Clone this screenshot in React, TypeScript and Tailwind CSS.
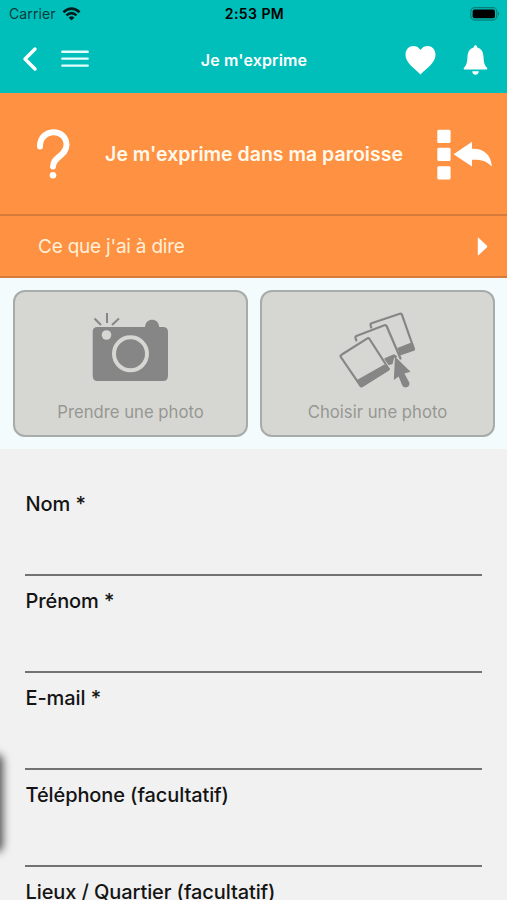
import React, { useState } from 'react';

interface FieldProps {
  label: string;
  name: string;
}

const FIELDS: FieldProps[] = [
  { label: 'Nom *', name: 'nom' },
  { label: 'Prénom *', name: 'prenom' },
  { label: 'E-mail *', name: 'email' },
  { label: 'Téléphone (facultatif)', name: 'telephone' },
  { label: 'Lieux / Quartier (facultatif)', name: 'lieux' },
];

const StatusBar = () => (
  <div className="grid h-[27px] grid-cols-3 items-center pl-[9px] pr-[7px] text-[14px] leading-none text-black">
    <div className="flex items-center gap-[6px] text-[#063b39]">
      <span className="tracking-[0.1px]">Carrier</span>
      <svg className="h-[14px] w-[19px]" viewBox="0 0 19 14" fill="none" stroke="#001c1b" strokeWidth="2.6">
        <path d="M1.4 5.2Q9.5-2 17.6 5.2" />
        <path d="M4.4 8.4Q9.5 3.9 14.6 8.4" />
        <path d="M6.6 10.5Q9.5 8 12.4 10.5L9.5 13.6Z" fill="#001c1b" stroke="none" />
      </svg>
    </div>
    <span className="pt-px text-center text-[14px] font-semibold tracking-[0.45px]">2:53 PM</span>
    <svg className="h-[14px] w-[30px] justify-self-end" viewBox="0 0 30 14">
      <rect x="0.8" y="0.7" width="26" height="12.4" rx="4" fill="none" stroke="#087f7b" strokeWidth="1.2" />
      <rect x="2.6" y="2.5" width="22.4" height="8.8" rx="2" fill="#000" />
      <path d="M28 4.8Q30.4 6.9 28 9Z" fill="#087f7b" />
    </svg>
  </div>
);

const NavBar = () => (
  <div className="grid h-[66px] grid-cols-3 items-center pl-[22px] pr-[19px]">
    <div className="flex items-center gap-[23px] pb-[2px]">
      <button title="Retour">
        <svg className="h-[26px] w-4" viewBox="0 0 16 26" fill="none" stroke="#fff" strokeWidth="3.4" strokeLinecap="round" strokeLinejoin="round">
          <path d="M13 3L3 13l10 10" />
        </svg>
      </button>
      <button title="Menu">
        <svg className="h-[26px] w-7" viewBox="0 0 28 26" fill="none" stroke="#e4fffd" strokeWidth="2.4" strokeLinecap="round">
          <path d="M1.3 5.8h25.4M1.3 12.6h25.4M1.3 19.6h25.4" />
        </svg>
      </button>
    </div>
    <h1 className="whitespace-nowrap pr-[2px] text-center text-[16px] font-semibold leading-none tracking-[0.15px] text-white">Je m'exprime</h1>
    <div className="flex items-center justify-end gap-[27px]">
      <button title="Favoris">
        <svg className="h-8 w-[31px]" viewBox="0 0 31 32" fill="#fff">
          <path d="M15.5 6C18.5 0 30.5-.3 30.5 11C30.5 18.5 22 24 15.5 30.5C9 24 .5 18.5.5 11C.5-.3 12.5 0 15.5 6Z" />
        </svg>
      </button>
      <button title="Notifications">
        <svg className="h-8 w-[25px]" viewBox="0 0 25 32" fill="#fff">
          <path d="M12.5 1.2C13.9 1.2 14.2 2.2 14.2 3.4C18.6 4.6 20.2 8 20.5 12.5C20.8 19 21.5 21 24 23.8C24.7 24.8 24.3 25.6 23 25.6H2C.7 25.6.3 24.8 1 23.8C3.5 21 4.2 19 4.5 12.5C4.8 8 6.4 4.6 10.8 3.4C10.8 2.2 11.1 1.2 12.5 1.2Z" />
          <path d="M9.2 27.2H15.8C15.6 32 9.4 32 9.2 27.2Z" />
        </svg>
      </button>
    </div>
  </div>
);

const Banner = () => (
  <div className="flex h-[123px] items-center justify-between border-b-2 border-[#d67b3b] pl-[35px] pr-[14px]">
    <svg className="h-[52px] w-9" viewBox="0 0 36 52" fill="none" stroke="#fff" strokeWidth="6" strokeLinecap="round">
      <path d="M5 18.5C4.6 0 31.5-.5 31.5 17C31.5 28 18 28.5 18 38.5" />
      <circle cx="18" cy="47.2" r="3.3" fill="#fff" stroke="none" />
    </svg>
    <h2 className="whitespace-nowrap pt-[3px] text-[19.5px] font-semibold leading-none text-[#fff9ec]">
      Je m'exprime dans ma paroisse
    </h2>
    <svg className="h-[52px] w-14" viewBox="0 0 56 52" fill="#fff">
      <rect x="0.3" y="1.8" width="13.3" height="13.3" rx="1.5" />
      <rect x="0.3" y="19.8" width="13.3" height="13.3" rx="1.5" />
      <rect x="0.3" y="38.2" width="13.3" height="13.3" rx="1.5" />
      <path d="M16.6 26.2L35 13.8V20.8C46 20.3 54 26 54.8 38.6C49 32.5 43.5 31.5 35 31.8V38.6Z" />
    </svg>
  </div>
);

const CameraIcon = () => (
  <svg className="h-[70px] w-[77px]" viewBox="0 0 77 70" fill="#868686">
    <path d="M2.5 6.5L9 13M15 1v10M27 6.5L20 13" fill="none" stroke="#868686" strokeWidth="2" />
    <path d="M5.5 15H53C53.5 5.2 66.8 5.2 67.2 15H71Q76 15 76 20V63.5Q76 69 71 69H5.5Q.7 69 .7 63.5V20Q.7 15 5.5 15Z" />
    <circle cx="14.5" cy="23" r="4.8" fill="#d6d7d2" />
    <circle cx="38.5" cy="41.8" r="16.5" fill="none" stroke="#d6d7d2" strokeWidth="4" />
  </svg>
);

const PhotosIcon = () => (
  <svg className="h-[78px] w-[77px]" viewBox="0 0 77 78" fill="none" stroke="#868686" strokeWidth="2.2" strokeLinejoin="round" strokeLinecap="round">
    <path d="M32.2 15.5L31.5 12.6Q31.3 11.5 32.5 11.2L60.8 1.8Q62.5 1.3 63 2.8L75 37L61 42" />
    <path d="M58.3 36L73 30.2L76 37.2Q76 38.4 75 38.8L61 43.6Z" fill="#868686" stroke="none" />
    <path d="M17.3 28.5L16.4 25.6Q16.2 24.5 17.4 24L45.4 13.2Q47 12.7 47.6 14L61.5 46.5" />
    <path d="M46 46.8L55 43L57.5 44.6L54.4 45.5L53 51.5L50 52.4Z" fill="#868686" strokeWidth="1.4" />
    <path d="M2.5 42.8L28 26.6Q29.6 25.6 30.5 27L49.8 57L23.3 73.8Q22 74.6 21.2 73.3L1.8 45Q1 43.8 2.5 42.8Z" />
    <path d="M17.5 68.2L45.3 52.4L50.6 56.6Q51 58 50 58.6L23.6 75Q22 76 21 74.8Z" fill="#868686" stroke="none" />
    <path d="M56 44.5L71.5 59.7L65.4 61.4L70.3 70.6C71.7 75 65.5 77.5 63.3 73.6L59.6 64.5L54.8 68Z" fill="#868686" stroke="none" />
  </svg>
);

interface PhotoButtonProps {
  label: string;
  children: React.ReactNode;
}

const PhotoButton: React.FC<PhotoButtonProps> = ({ label, children }) => (
  <button className="flex h-[147px] flex-1 flex-col items-center rounded-xl border-2 border-[#a7acaa] bg-[#d6d7d2] pt-[20px]">
    <div className="h-[90px]">{children}</div>
    <span className="text-[16.7px] leading-[20px] text-[#969794]">{label}</span>
  </button>
);

const Field: React.FC<FieldProps> = ({ label, name }) => {
  const [value, setValue] = useState('');

  return (
    <label className="flex h-[97px] shrink-0 flex-col border-b-2 border-[#727272]">
      <span className="mt-[13px] whitespace-nowrap pl-[0.5px] text-[20px] font-medium leading-[24px] tracking-[-0.1px] text-[#141414]">
        {label}
      </span>
      <input
        name={name}
        value={value}
        onChange={(e) => setValue(e.target.value)}
        className="min-h-0 w-full flex-1 bg-transparent text-lg outline-none"
      />
    </label>
  );
};

export default function App() {
  return (
    <div className="relative flex h-[900px] w-[507px] flex-col overflow-hidden bg-[#f1f1f1] font-['Inter','Liberation_Sans',sans-serif]">
      <header className="h-[93px] shrink-0 bg-[#00beb9]">
        <StatusBar />
        <NavBar />
      </header>

      <section className="shrink-0 bg-[#ff9142]">
        <Banner />
        <button className="flex h-[62px] w-full items-center justify-between border-b-2 border-[#d67b3b] pl-[38px] pr-[19px]">
          <span className="text-[19px] leading-none tracking-[-0.22px] text-[#fff0d8]">Ce que j'ai à dire</span>
          <svg className="h-[19px] w-[11px]" viewBox="0 0 11 19" fill="#fff">
            <path d="M.8 1.2Q.8 0 1.8 1L10 8.7Q10.7 9.5 10 10.3L1.8 18Q.8 19 .8 17.8Z" />
          </svg>
        </button>
      </section>

      {/* Photo actions */}
      <section className="flex h-[171px] shrink-0 gap-3 bg-[#f3fbfd] pl-[13px] pr-3 pt-3">
        <PhotoButton label="Prendre une photo">
          <CameraIcon />
        </PhotoButton>
        <PhotoButton label="Choisir une photo">
          <PhotosIcon />
        </PhotoButton>
      </section>

      <form className="flex flex-col px-[25px] pt-[30px]">
        {FIELDS.map((field) => (
          <Field key={field.name} {...field} />
        ))}
      </form>

      {/* Edge of the closed side drawer */}
      <div className="absolute -left-[10px] top-[757px] h-[92px] w-[10px] rounded-sm bg-[#777] shadow-[0_0_9px_3px_rgba(0,0,0,0.65)]" />
    </div>
  );
}
